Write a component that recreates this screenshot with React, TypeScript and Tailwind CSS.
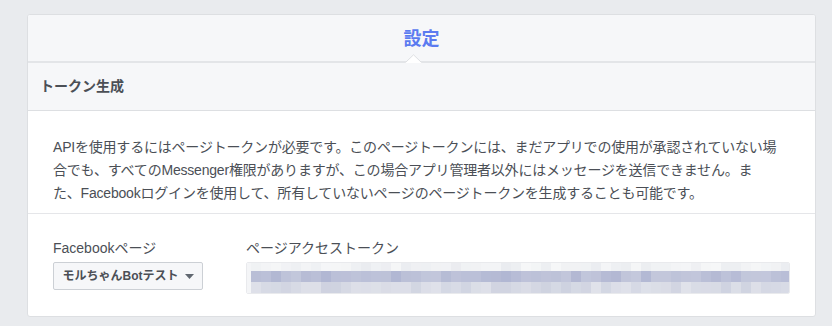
import React from "react";

const FONT = { fontFamily: '"Liberation Sans", "Noto Sans CJK JP", sans-serif' };

function TokenBlur() {
  const cols = 54;
  const w = 10;
  let seed = 7;
  const rnd = () => {
    seed = (seed * 9301 + 49297) % 233280;
    return seed / 233280;
  };
  const mix = (a: number[], b: number[], t: number) =>
    `rgb(${Math.round(a[0] + (b[0] - a[0]) * t)},${Math.round(a[1] + (b[1] - a[1]) * t)},${Math.round(a[2] + (b[2] - a[2]) * t)})`;
  const rects: React.ReactNode[] = [];
  for (let i = 0; i < cols; i++) {
    const x = 4 + i * w;
    rects.push(<rect key={"a" + i} x={x} y={0} width={w} height={8} fill={mix([246, 247, 248], [234, 236, 240], rnd())} />);
    rects.push(<rect key={"b" + i} x={x} y={8} width={w} height={11} fill={mix([196, 200, 220], [176, 182, 210], rnd())} />);
    rects.push(<rect key={"c" + i} x={x} y={19} width={w} height={11} fill={mix([224, 226, 234], [206, 210, 224], rnd())} />);
  }
  return (
    <svg width="544" height="31" viewBox="0 0 544 31" className="block">
      <rect x="0" y="0" width="544" height="31" fill="#f4f5f7" />
      {rects}
    </svg>
  );
}

export default function App() {
  return (
    <div className="w-[832px] h-[326px] bg-[#e9ebee] pt-[14px] pl-[27px]" style={FONT}>
      <div className="w-[789px] bg-white border border-[#dddfe2] rounded-[3px] overflow-hidden">
        <div className="relative h-[48px] bg-[#f6f7f9] border-b-2 border-[#e3e5e8] flex items-center justify-center">
          <span className="text-[18px] font-bold text-[#5b7bf0] leading-none mt-[1px]">設定</span>
          <svg className="absolute left-[377px] bottom-[-2px]" width="17" height="9" viewBox="0 0 17 9">
            <path d="M0 9 L8.5 0.8 L17 9 Z" fill="#ffffff" />
            <path d="M0.5 8.5 L8.5 0.8 L16.5 8.5" fill="none" stroke="#dddfe2" strokeWidth="1" />
          </svg>
        </div>
        <div className="h-[48px] bg-[#f6f7f9] border-b border-[#dddfe2] px-[12px] flex items-center">
          <span className="text-[14px] font-bold text-[#4b4f56]">トークン生成</span>
        </div>
        <div className="pt-[25px] pb-[8px] px-[25px] border-b border-[#e5e6e9]">
          <p className="text-[14px] leading-[23px] text-[#4b4f56] whitespace-nowrap tracking-[-0.2px]">
            APIを使用するにはページトークンが必要です。このページトークンには、まだアプリでの使用が承認されていない場
            <br />
            合でも、すべてのMessenger権限がありますが、この場合アプリ管理者以外にはメッセージを送信できません。ま
            <br />
            た、Facebookログインを使用して、所有していないページのページトークンを生成することも可能です。
          </p>
        </div>
        <div className="pt-[25px] pb-[22px] px-[25px] flex gap-[43px]">
          <div className="flex flex-col">
            <div className="text-[14px] leading-[18px] text-[#4b4f56] h-[23px]">Facebookページ</div>
            <button className="h-[28px] w-[150px] border border-[#ccd0d5] rounded-[2px] bg-[#f6f7f9] flex items-center justify-center gap-[6px] text-[12px] font-bold text-[#4b4f56]">
              <span>モルちゃんBotテスト</span>
              <svg width="9" height="5" viewBox="0 0 9 5">
                <path d="M0 0 L9 0 L4.5 5 Z" fill="#606770" />
              </svg>
            </button>
          </div>
          <div className="flex flex-col">
            <div className="text-[14px] leading-[18px] text-[#4b4f56] h-[23px]">ページアクセストークン</div>
            <div className="w-[544px] h-[32px] border border-[#e9eaed] rounded-[2px] overflow-hidden">
              <TokenBlur />
            </div>
          </div>
        </div>
      </div>
    </div>
  );
}
